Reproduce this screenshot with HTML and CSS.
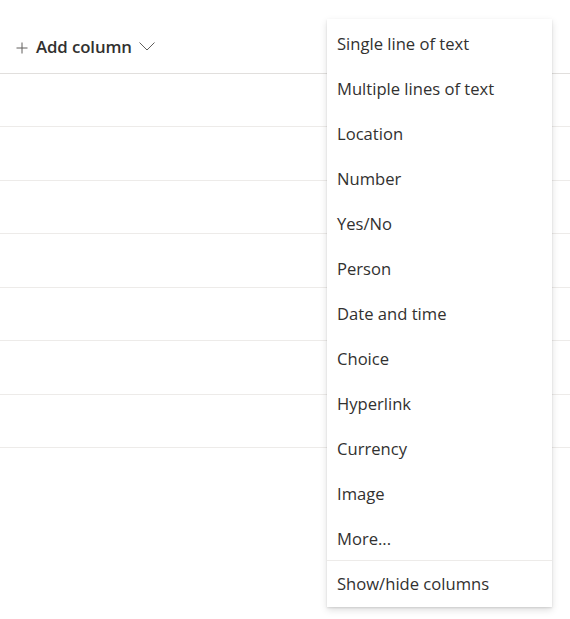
FILE: index.html
```html
<!DOCTYPE html>
<html lang="en">
<head>
<meta charset="utf-8">
<title>Add column</title>
<link rel="stylesheet" href="styles.css">
</head>
<body>
<div class="grid">
  <div class="header">
    <button class="add-col">
      <svg class="plus" width="12" height="12" viewBox="0 0 12 12"><path d="M6 0.5V11.5M0.5 6H11.5" stroke="#605e5c" stroke-width="1" fill="none"/></svg>
      <span class="add-label">Add column</span>
      <svg class="chev" width="16" height="9" viewBox="0 0 16 9"><path d="M0.5 0.5L8 8L15.5 0.5" stroke="#605e5c" stroke-width="1" fill="none"/></svg>
    </button>
  </div>
  <div class="row"></div>
  <div class="row"></div>
  <div class="row"></div>
  <div class="row"></div>
  <div class="row"></div>
  <div class="row"></div>
  <div class="row"></div>
</div>
<div class="menu" role="menu">
  <ul class="menu-list">
    <li class="menu-item">Single line of text</li>
    <li class="menu-item">Multiple lines of text</li>
    <li class="menu-item">Location</li>
    <li class="menu-item">Number</li>
    <li class="menu-item">Yes/No</li>
    <li class="menu-item">Person</li>
    <li class="menu-item">Date and time</li>
    <li class="menu-item">Choice</li>
    <li class="menu-item">Hyperlink</li>
    <li class="menu-item">Currency</li>
    <li class="menu-item">Image</li>
    <li class="menu-item">More...</li>
    <li class="menu-divider"></li>
    <li class="menu-item">Show/hide columns</li>
  </ul>
</div>
</body>
</html>
```
FILE: styles.css
```css
html, body {
  margin: 0;
  padding: 0;
  background: #ffffff;
}
body {
  font-family: "Open Sans", "Noto Sans", "Liberation Sans", sans-serif;
  color: #323130;
  width: 570px;
  height: 619px;
  overflow: hidden;
  position: relative;
}
.grid {
  display: flex;
  flex-direction: column;
}
.header {
  height: 73px;
  border-bottom: 1px solid #e1dfdd;
  display: flex;
  align-items: flex-end;
  box-sizing: content-box;
}
.add-col {
  height: 53px;
  display: flex;
  align-items: center;
  padding: 0 0 0 16px;
  border: 0;
  background: transparent;
  font: inherit;
  color: #323130;
  cursor: pointer;
}
.plus {
  margin-right: 8px;
  margin-top: 2px;
}
.add-label {
  font-size: 16.8px;
  font-weight: 600;
  letter-spacing: -0.1px;
}
.chev {
  margin-left: 7px;
  margin-top: 0px;
}
.row {
  height: 52px;
  border-bottom: 1px solid #edebe9;
}
.row:nth-child(odd) {
  height: 53px;
}
.menu {
  position: absolute;
  left: 327px;
  top: 19px;
  width: 225px;
  background: #ffffff;
  box-shadow: 0 3.2px 7.2px rgba(0,0,0,0.132), 0 0.6px 1.8px rgba(0,0,0,0.108);
  padding: 1px 0 1px 0;
}
.menu-list {
  list-style: none;
  margin: 0;
  padding: 0;
}
.menu-item {
  height: 45px;
  display: flex;
  align-items: center;
  padding-left: 10px;
  padding-top: 1px;
  box-sizing: border-box;
  font-size: 16.6px;
  color: #323130;
  white-space: nowrap;
}
.menu-item:last-child {
  padding-top: 0;
}
.menu-divider {
  height: 1px;
  background: #edebe9;
}
```
